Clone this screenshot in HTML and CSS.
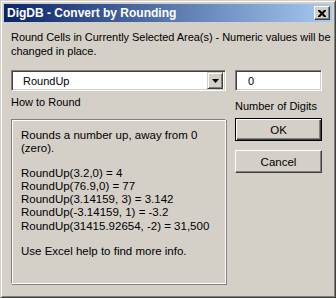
FILE: index.html
```html
<!DOCTYPE html>
<html lang="en">
<head>
  <meta charset="UTF-8">
  <title>DigDB - Convert by Rounding</title>
  <link rel="stylesheet" href="styles.css">
</head>
<body>
  <div class="window">
    <div class="titlebar">
      <span class="title">DigDB - Convert by Rounding</span>
      <button class="close-btn" aria-label="Close">
        <svg width="8" height="7" viewBox="0 0 8 7">
          <path d="M0 0h2l2 2 2-2h2v1l-2.5 2.5 2.5 2.5v1h-2l-2-2-2 2h-2v-1l2.5-2.5-2.5-2.5z" fill="#000"/>
        </svg>
      </button>
    </div>
    <div class="content">
      <p class="intro">Round Cells in Currently Selected Area(s) - Numeric values will be<br>changed in place.</p>
      <div class="form">
        <div class="combo">
          <span class="combo-value">RoundUp</span>
          <span class="combo-arrow">
            <svg width="7" height="4" viewBox="0 0 7 4"><path d="M0 0h7l-3.5 4z" fill="#000"/></svg>
          </span>
        </div>
        <div class="field"><span>0</span></div>
        <label class="caption">How to Round</label>
        <label class="caption caption-right">Number of Digits</label>
        <div class="group">
          <p>Rounds a number up, away from 0<br>(zero).</p>
          <p>RoundUp(3.2,0) = 4<br>
            RoundUp(76.9,0) = 77<br>
            RoundUp(3.14159, 3) = 3.142<br>
            RoundUp(-3.14159, 1) = -3.2<br>
            RoundUp(31415.92654, -2) = 31,500</p>
          <p>Use Excel help to find more info.</p>
        </div>
        <div class="buttons">
          <button class="btn btn-default">OK</button>
          <button class="btn">Cancel</button>
        </div>
      </div>
    </div>
  </div>
</body>
</html>
```

FILE: styles.css
```css
body {
  margin: 0;
  font-family: "Liberation Sans", Arial, sans-serif;
  font-size: 11px;
  color: #000;
}
.window {
  width: 336px;
  height: 298px;
  box-sizing: border-box;
  background-color: #d4d0c8;
  border: 1px solid;
  border-color: #d4d0c8 #404040 #404040 #d4d0c8;
  box-shadow: inset 1px 1px #fff, inset -1px -1px #808080;
  padding: 3px;
}
.titlebar {
  height: 18px;
  display: flex;
  align-items: center;
  justify-content: space-between;
  padding: 0 2px 0 3px;
  background: linear-gradient(90deg, #0a246a 0%, #a6caf0 100%);
}
.title {
  color: #fff;
  font-weight: bold;
  font-size: 12px;
}
.close-btn {
  width: 16px;
  height: 14px;
  padding: 0;
  display: flex;
  align-items: center;
  justify-content: center;
  background-color: #d4d0c8;
  border: 1px solid;
  border-color: #fff #404040 #404040 #fff;
  box-shadow: inset -1px -1px #808080;
}
.content {
  padding: 8px 8px 0 7px;
}
.intro {
  margin: 0;
  line-height: 14px;
  white-space: nowrap;
  letter-spacing: -0.05px;
}
.form {
  display: grid;
  grid-template-columns: 215px 87px;
  column-gap: 9px;
  margin-top: 12px;
}
.combo, .field {
  height: 21px;
  box-sizing: border-box;
  background-color: #fff;
  border: 1px solid;
  border-color: #808080 #fff #fff #808080;
  box-shadow: inset 1px 1px #404040, inset -1px -1px #d4d0c8;
  display: flex;
  align-items: center;
}
.combo-value {
  flex: 1;
  padding-left: 11px;
}
.combo-arrow {
  width: 16px;
  height: 17px;
  margin-right: 2px;
  box-sizing: border-box;
  background-color: #d4d0c8;
  border: 1px solid;
  border-color: #d4d0c8 #404040 #404040 #d4d0c8;
  box-shadow: inset 1px 1px #fff, inset -1px -1px #808080;
  display: flex;
  align-items: center;
  justify-content: center;
}
.field span {
  padding-left: 12px;
}
.caption {
  margin-top: 5px;
  height: 18px;
}
.caption-right {
  margin-top: 9px;
  height: 14px;
}
.group {
  margin-top: 5px;
  height: 165px;
  box-sizing: border-box;
  border: 1px solid;
  border-color: #808080 #fff #fff #808080;
  box-shadow: inset 1px 1px #fff, 1px 1px #808080;
  padding: 9px 9px;
  font-size: 11.5px;
  line-height: 13.3px;
  white-space: nowrap;
}
.group p {
  margin: 0 0 11px;
}
.group p + p + p {
  margin-top: 12px;
}
.buttons {
  display: flex;
  flex-direction: column;
  gap: 9px;
  margin-top: 4px;
}
.btn {
  height: 23px;
  font-family: inherit;
  font-size: 11.5px;
  color: #000;
  background-color: #d4d0c8;
  border: 1px solid;
  border-color: #fff #404040 #404040 #fff;
  box-shadow: inset -1px -1px #808080;
  padding: 0;
}
.btn-default {
  border: 1px solid #000;
  box-shadow: inset 1px 1px #fff, inset -1px -1px #404040, inset -2px -2px #808080;
}
```
